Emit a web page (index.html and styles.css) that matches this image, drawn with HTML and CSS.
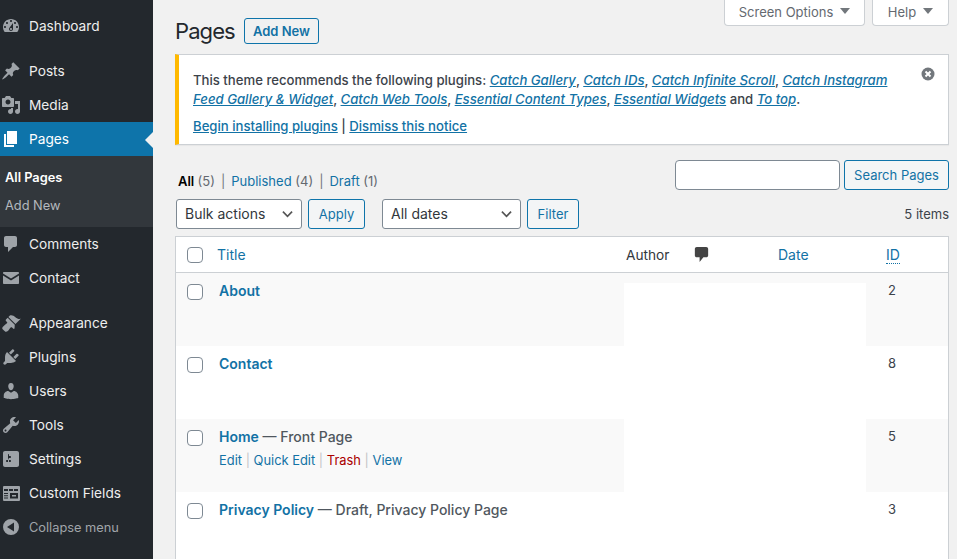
FILE: index.html
```
<!DOCTYPE html>
<html lang="en">
<head>
<meta charset="utf-8">
<title>Pages</title>
<link rel="stylesheet" href="styles.css">
</head>
<body>
<div class="app">
<nav class="sidebar">
  <a class="item"><svg class="ico" viewBox="0 0 20 20"><path d="M3.76 16h12.48c1.1-1.37 1.76-3.11 1.76-5 0-4.42-3.58-8-8-8s-8 3.58-8 8c0 1.89.66 3.63 1.76 5zM10 4c.55 0 1 .45 1 1s-.45 1-1 1-1-.45-1-1 .45-1 1-1zM6 6c.55 0 1 .45 1 1s-.45 1-1 1-1-.45-1-1 .45-1 1-1zm8 0c.55 0 1 .45 1 1s-.45 1-1 1-1-.45-1-1 .45-1 1-1zm-5.37 5.55L12 7v6c0 1.1-.9 2-2 2s-2-.9-2-2c0-.57.24-1.08.63-1.45zM4 10c.55 0 1 .45 1 1s-.45 1-1 1-1-.45-1-1 .45-1 1-1zm12 0c.55 0 1 .45 1 1s-.45 1-1 1-1-.45-1-1 .45-1 1-1zm-5 3c0-.55-.45-1-1-1s-1 .45-1 1 .45 1 1 1 1-.45 1-1z"/></svg>Dashboard</a>
  <div class="sep"></div>
  <a class="item"><svg class="ico" viewBox="0 0 20 20"><path d="M10.44 3.02l1.82-1.82 6.36 6.35-1.83 1.82c-1.05-.68-2.48-.57-3.41.36l-.75.75c-.92.93-1.04 2.35-.35 3.41l-1.83 1.82-2.41-2.41-2.8 2.79c-.42.42-3.38 2.71-3.8 2.29s1.86-3.39 2.28-3.81l2.79-2.79L4.1 9.36l1.83-1.82c1.05.69 2.48.57 3.4-.36l.75-.75c.93-.92 1.05-2.35.36-3.41z"/></svg>Posts</a>
  <a class="item"><svg class="ico" viewBox="0 0 20 20"><path fill-rule="evenodd" d="M13 11V4c0-.55-.45-1-1-1h-1.67L9 1H5L3.67 3H2c-.55 0-1 .45-1 1v7c0 .55.45 1 1 1h10c.55 0 1-.45 1-1zM7 4.5c1.38 0 2.5 1.12 2.5 2.5S8.38 9.5 7 9.5 4.5 8.38 4.5 7 5.62 4.5 7 4.5zM14 6h5v10.5c0 1.38-1.12 2.5-2.5 2.5S14 17.88 14 16.5s1.12-2.5 2.5-2.5c.17 0 .34.02.5.05V9h-3V6zm-4 8.05V13h2v3.5c0 1.38-1.12 2.5-2.5 2.5S7 17.88 7 16.5 8.12 14 9.5 14c.17 0 .34.02.5.05z"/></svg>Media</a>
  <a class="item current"><svg class="ico" viewBox="0 0 20 20"><path d="M6 15V2h10v13H6zm-1 1h8v2H3V5h2v11z"/></svg>Pages</a>
  <div class="submenu">
    <a class="sub active">All Pages</a>
    <a class="sub">Add New</a>
  </div>
  <a class="item"><svg class="ico" viewBox="0 0 20 20"><path d="M5 2h9c1.1 0 2 .9 2 2v7c0 1.1-.9 2-2 2h-2l-5 5v-5H5c-1.1 0-2-.9-2-2V4c0-1.1.9-2 2-2z"/></svg>Comments</a>
  <a class="item"><svg class="ico" viewBox="0 0 20 20"><path d="M3 4h14c.55 0 1 .45 1 1v.6l-8 5-8-5V5c0-.55.45-1 1-1zM2 7.4l8 5 8-5V15c0 .55-.45 1-1 1H3c-.55 0-1-.45-1-1V7.4z"/></svg>Contact</a>
  <div class="sep"></div>
  <a class="item"><svg class="ico" viewBox="0 0 20 20"><path d="M14.48 11.06L7.41 3.99l1.5-1.5c.5-.56 2.3-.47 3.51.32 1.21.8 1.43 1.28 2.91 2.1 1.18.64 2.45 1.26 4.45.85zm-.71.71L6.7 4.7 4.93 6.47c-.39.39-.39 1.02 0 1.41l1.06 1.06c.39.39.39 1.03 0 1.42-.6.6-1.43 1.11-2.21 1.69-.35.26-.7.53-1.01.84C1.43 13.71.96 15.12 1.4 15.9l2.7 2.7c.78.44 2.19-.03 3.01-.85.31-.31.58-.66.84-1.01.58-.78 1.09-1.61 1.69-2.21.39-.39 1.03-.39 1.42 0l1.06 1.06c.39.39 1.02.39 1.41 0z"/></svg>Appearance</a>
  <a class="item"><svg class="ico" viewBox="0 0 20 20"><path d="M13.11 4.36L9.87 7.6 8 5.73l3.24-3.24c.35-.34 1.05-.2 1.56.32.52.51.66 1.21.31 1.55zm-8 1.77l.91-1.12 9.01 9.01-1.19.84c-.71.71-2.63 1.16-3.82 1.16H6.14L4.9 17.26c-.59.59-1.54.59-2.12 0-.59-.58-.59-1.53 0-2.12l1.24-1.24v-3.88c0-1.13.4-3.19 1.09-3.89zm7.26 3.97l3.24-3.24c.34-.35 1.04-.21 1.55.31.52.51.66 1.21.31 1.55l-3.24 3.25z"/></svg>Plugins</a>
  <a class="item"><svg class="ico" viewBox="0 0 20 20"><path d="M10 9.25c-2.27 0-2.73-3.44-2.73-3.44C7 4.02 7.82 2 9.97 2c2.16 0 2.98 2.02 2.71 3.81 0 0-.41 3.44-2.68 3.44zm0 2.57L12.72 10c2.39 0 4.52 2.33 4.52 4.53v2.49s-3.65 1.13-7.24 1.13c-3.65 0-7.24-1.13-7.24-1.13v-2.49c0-2.25 1.94-4.48 4.47-4.48z"/></svg>Users</a>
  <a class="item"><svg class="ico" viewBox="0 0 20 20"><path d="M16.68 9.77c-1.34 1.34-3.3 1.67-4.95.99l-5.41 6.52c-.99.99-2.59.99-3.58 0s-.99-2.59 0-3.57l6.52-5.42c-.68-1.65-.35-3.61.99-4.95 1.28-1.28 3.12-1.62 4.72-1.06l-2.89 2.89 2.82 2.82 2.86-2.87c.53 1.58.18 3.39-1.08 4.65zM3.81 16.21c.4.39 1.04.39 1.43 0 .4-.4.4-1.04 0-1.43-.39-.4-1.03-.4-1.43 0-.39.39-.39 1.03 0 1.43z"/></svg>Tools</a>
  <a class="item"><svg class="ico" viewBox="0 0 20 20"><path d="M18 16V4c0-1.1-.9-2-2-2H4c-1.1 0-2 .9-2 2v12c0 1.1.9 2 2 2h12c1.1 0 2-.9 2-2zM8 11h1c.55 0 1 .45 1 1s-.45 1-1 1H8v1.5c0 .28-.22.5-.5.5s-.5-.22-.5-.5V13H6c-.55 0-1-.45-1-1s.45-1 1-1h1V5.5c0-.28.22-.5.5-.5s.5.22.5.5V7h1c.55 0 1 .45 1 1s-.45 1-1 1h-1v5.5c0 .28-.22.5-.5.5s-.5-.22-.5-.5V9z"/></svg>Settings</a>
  <a class="item"><svg class="ico" viewBox="0 0 20 20"><path fill-rule="evenodd" d="M3 3h15a1 1 0 0 1 1 1v13a1 1 0 0 1-1 1H3a1 1 0 0 1-1-1V4a1 1 0 0 1 1-1zm0 3v2h4V6H3zm5 0v2h4V6H8zm5 0v2h4V6h-4zM3 10v1h4v-1H3zm0 2.200v1h4v-1H3zm0 2.200v1h4v-1H3zM9 10v5.400h8V10H9zm2 2h4v1.500h-4V12z"/></svg>Custom Fields</a>
  <a class="item collapse"><svg class="ico" viewBox="0 0 20 20"><path fill-rule="evenodd" d="M10 2a8 8 0 1 1 0 16 8 8 0 0 1 0-16zm3 3.500L6 10l7 4.500v-9z"/></svg>Collapse menu</a>
</nav>
<main class="main">
  <div class="screen-meta">
    <button class="tab">Screen Options<span class="caret"></span></button>
    <button class="tab">Help<span class="caret"></span></button>
  </div>
  <header class="heading">
    <h1>Pages</h1>
    <a class="btn add">Add New</a>
  </header>
  <section class="notice">
    <div class="notice-body">
      <p class="lead">This theme recommends the following plugins: <a><em>Catch Gallery</em></a>, <a><em>Catch IDs</em></a>, <a><em>Catch Infinite Scroll</em></a>, <a><em>Catch Instagram Feed Gallery &amp; Widget</em></a>, <a><em>Catch Web Tools</em></a>, <a><em>Essential Content Types</em></a>, <a><em>Essential Widgets</em></a> and <a><em>To top</em></a>.</p>
      <p class="actions"><a>Begin installing plugins</a> | <a>Dismiss this notice</a></p>
    </div>
    <svg class="dismiss" viewBox="0 0 14 14"><circle cx="7" cy="7" r="6.500"/><path d="M4.500 4.500l5 5m0-5l-5 5"/></svg>
  </section>
  <div class="filter-top">
    <ul class="views">
      <li class="cur">All <span>(5)</span></li>
      <li class="bar">|</li>
      <li><a>Published</a> <span>(4)</span></li>
      <li class="bar">|</li>
      <li><a>Draft</a> <span>(1)</span></li>
    </ul>
    <form class="search">
      <input class="search-input" type="text" aria-label="Search">
      <a class="btn">Search Pages</a>
    </form>
  </div>
  <div class="tablenav">
    <select class="sel bulk"><option>Bulk actions</option></select>
    <a class="btn apply">Apply</a>
    <select class="sel dates"><option>All dates</option></select>
    <a class="btn">Filter</a>
    <span class="count">5 items</span>
  </div>
  <div class="table">
    <div class="row head">
      <div class="cell check"><span class="box"></span></div>
      <div class="cell title"><a>Title</a></div>
      <div class="cell author">Author</div>
      <div class="cell comments"><svg viewBox="0 0 20 20"><path d="M5 2h10c1.100 0 2 .9 2 2v7c0 1.100-.9 2-2 2h-3l-4 5v-5H5c-1.100 0-2-.9-2-2V4c0-1.100.9-2 2-2z"/></svg></div>
      <div class="cell date"><a>Date</a></div>
      <div class="cell id"><a><abbr>ID</abbr></a></div>
    </div>
    <div class="row alt">
      <div class="cell check"><span class="box"></span></div>
      <div class="cell title"><a class="name">About</a></div>
      <div class="cell blank first"></div>
      <div class="cell id">2</div>
    </div>
    <div class="row">
      <div class="cell check"><span class="box"></span></div>
      <div class="cell title"><a class="name">Contact</a></div>
      <div class="cell blank"></div>
      <div class="cell id">8</div>
    </div>
    <div class="row alt">
      <div class="cell check"><span class="box"></span></div>
      <div class="cell title"><a class="name">Home</a><b class="state"> — Front Page</b>
        <div class="row-actions"><a>Edit</a> <i>|</i> <a>Quick Edit</a> <i>|</i> <a class="trash">Trash</a> <i>|</i> <a>View</a></div>
      </div>
      <div class="cell blank"></div>
      <div class="cell id">5</div>
    </div>
    <div class="row">
      <div class="cell check"><span class="box"></span></div>
      <div class="cell title"><a class="name">Privacy Policy</a><b class="state"> — Draft, Privacy Policy Page</b></div>
      <div class="cell blank"></div>
      <div class="cell id">3</div>
    </div>
  </div>
</main>
</div>
</body>
</html>
```
FILE: styles.css
```
* { box-sizing: border-box; }
html, body { margin: 0; height: 100%; overflow: hidden; }
body { font-family: Inter, "Liberation Sans", sans-serif; font-size: 14px; color: #3c434a; background: #f1f1f1; }
a { color: #1272a5; text-decoration: none; }
p { margin: 0; }
.app { display: flex; height: 559px; overflow: hidden; }

.sidebar { width: 153px; flex: none; background: #23282d; padding-top: 9px; color: #eee; font-size: 13.700px; }
.item { display: flex; align-items: center; height: 34px; color: #eeeeee; position: relative; }
.ico { width: 20px; height: 20px; margin: 0 8px 0 1px; fill: #9ea3a8; flex: none; }
.sep { height: 11px; }
.current { background: #0e74aa; color: #fff; }
.current .ico { fill: #fff; }
.current::after { content: ""; position: absolute; right: 0; top: 10px; border: 8px solid transparent; border-right-color: #f1f1f1; border-left-width: 0; }
.submenu { background: #32373c; height: 71px; padding-top: 7px; font-size: 12.800px; }
.sub { display: flex; align-items: center; height: 28px; padding-left: 5px; color: #b4b9be; }
.active { color: #fff; font-weight: 600; }
.collapse { color: #a0a5aa; font-size: 12.800px; }

.main { flex: 1; min-width: 0; padding: 0 8px 0 22px; }
.screen-meta { display: flex; justify-content: flex-end; gap: 7px; height: 26px; }
.tab { display: flex; align-items: center; justify-content: center; height: 26px; padding: 0 0 2px; background: #fff; border: 1px solid #ccd0d4; border-top: 0; border-radius: 0 0 4px 4px; font: 13px Inter, sans-serif; color: #646970; white-space: nowrap; }
.tab:first-child { width: 141px; }
.tab:last-child { width: 77px; }
.caret { margin-left: 7px; border: 5px solid transparent; border-top: 6px solid #72777c; border-bottom: 0; margin-top: -1px; }

.heading { display: flex; align-items: center; gap: 9px; margin-top: -8px; height: 26px; }
h1 { margin: 0; width: 60px; font-size: 22px; letter-spacing: -.9px; font-weight: 400; color: #23282d; white-space: nowrap; }
.btn { display: inline-flex; align-items: center; justify-content: center; height: 30px; padding: 0 10px; border: 1px solid #0e74aa; border-radius: 3px; background: #f3f5f6; color: #1272a5; font-size: 13px; white-space: nowrap; }
.add { height: 26px; width: 75px; padding: 0; font-weight: 600; background: #f1f1f1; }

.notice { display: flex; justify-content: space-between; height: 91px; margin-top: 10px; padding: 16px 13px 0 14px; background: #fff; border: 1px solid #ccd0d4; border-left: 4px solid #ffb900; box-shadow: 0 1px 1px rgba(0,0,0,.04); }
.notice-body { width: 705px; font-weight: 500; line-height: 19px; font-size: 13.150px; }
.notice-body a { text-decoration: underline; }
.notice-body em { font-style: italic; font-weight: 500; }
.actions { margin-top: 8px; }
.dismiss { width: 14px; height: 14px; flex: none; margin-top: -4px; }
.dismiss circle { fill: #72777c; }
.dismiss path { stroke: #fff; stroke-width: 2; fill: none; }

.filter-top { display: flex; justify-content: space-between; align-items: flex-end; height: 30px; margin-top: 15px; }
.views { display: flex; gap: 6px; margin: 0; padding: 0 0 0 3px; list-style: none; font-size: 13px; line-height: 18px; color: #50575e; }
.views span { color: #646970; }
.cur { color: #000; font-weight: 600; }
.cur span { font-weight: 400; }
.bar { color: #72777c; }
.search { display: flex; gap: 4px; margin: 0; }
.search-input { width: 165px; height: 30px; border: 1px solid #7e8993; border-radius: 4px; background: #fff; }
.search .btn { width: 105px; padding: 0; }

.tablenav { display: flex; align-items: center; height: 30px; margin-top: 9px; padding-left: 1px; gap: 6px; }
.sel { height: 30px; appearance: none; -webkit-appearance: none; border: 1px solid #7e8993; border-radius: 3px; padding: 0 24px 2px 8px; font: 14px Inter, sans-serif; color: #32373c; background: #fff url("data:image/svg+xml,%3Csvg xmlns='http://www.w3.org/2000/svg' viewBox='0 0 12 8'%3E%3Cpath d='M1 1.500l5 5 5-5' fill='none' stroke='%23555' stroke-width='1.800'/%3E%3C/svg%3E") no-repeat right 8px center / 11px 8px; }
.bulk { width: 126px; }
.dates { width: 139px; }
.apply { width: 57px; margin-right: 11px; }
.tablenav .btn:last-of-type { width: 52px; padding: 0; }
.count { margin-left: auto; font-size: 13px; color: #3c434a; }

.table { margin-top: 7px; background: #fff; border: 1px solid #ccd0d4; border-bottom: 0; }
.row { display: grid; grid-template-columns: 42px 406px 242px 82px; height: 73px; font-size: 14px; }
.head { grid-template-columns: 41px 409px 68px 84px 90px 80px; height: 36px; border-bottom: 1px solid #ccd0d4; align-items: center; }
.alt { background: #f9f9f9; }
.cell { padding-top: 9px; }
.check { padding: 11px 0 0 11px; }
.head .cell { padding: 0; }
.head .check { padding-left: 11px; }
.box { display: block; width: 16px; height: 16px; border: 1px solid #7e8993; border-radius: 4px; background: #fff; }
.name { font-weight: 600; }
.title { padding-left: 1px; }
.state { font-weight: 500; color: #50575e; }
.row-actions { margin-top: 8px; font-size: 12.900px; }
.row-actions i { font-style: normal; color: #c3c4c7; }
.trash { color: #a00; }
.blank { background: #fff; }
.first { margin-top: 10px; padding: 0; }
.id { padding-left: 22px; font-size: 13px; color: #3c434a; }
.head .id { padding-left: 18px; font-size: 14px; }
abbr { border-bottom: 1px dotted #1272a5; }
.comments svg { display: block; width: 19px; height: 19px; fill: #444; margin-left: -2px; }
.author { color: #32373c; font-size: 13.700px; }
```
